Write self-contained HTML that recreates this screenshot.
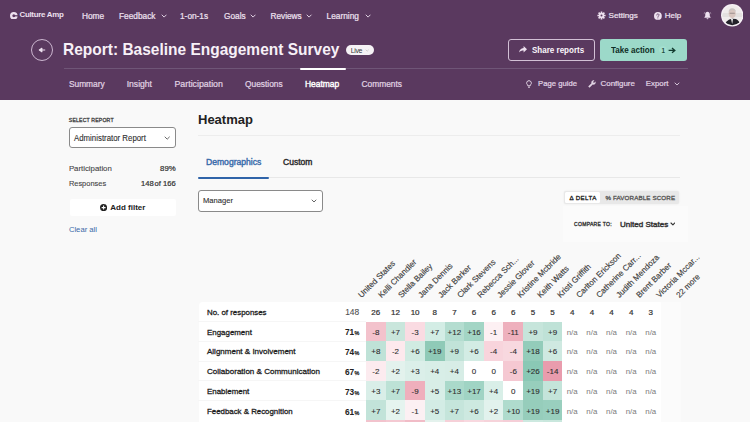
<!DOCTYPE html>
<html><head><meta charset="utf-8">
<style>
*{box-sizing:border-box;margin:0;padding:0}
html,body{width:750px;height:422px;overflow:hidden;background:#f9f9f9;font-family:"Liberation Sans", sans-serif;color:#222;position:relative}
.t{position:absolute;white-space:nowrap;line-height:1}
.r{position:absolute}
</style></head><body>
<div class="r" style="left:0.00px;top:0.00px;width:750.00px;height:100.00px;background:#5a395f"></div>
<svg class="r" style="left:10.1px;top:11.6px" width="7.6" height="7.6" viewBox="0 0 76 76"><circle cx="38" cy="38" r="26.5" fill="none" stroke="#ede0ef" stroke-width="23"/><rect x="40" y="32" width="40" height="12" fill="#5a395f"/></svg>
<div class="t" style="left:19.50px;top:11.18px;font-size:7.9px;font-weight:bold;color:#ede0ef;letter-spacing:-0.28px">Culture Amp</div>
<div class="t" style="left:82.00px;top:11.75px;font-size:8.3px;font-weight:normal;-webkit-text-stroke:0.22px #ede0ef;color:#ede0ef;">Home</div>
<div class="t" style="left:119.00px;top:11.75px;font-size:8.3px;font-weight:normal;-webkit-text-stroke:0.22px #ede0ef;color:#ede0ef;">Feedback</div>
<svg class="r" style="left:161.00px;top:13.85px" width="6.20" height="4.10"><path d="M1 1 L3.10 3.10 L5.20 1" fill="none" stroke="#ede0ef" stroke-width="0.9" stroke-linecap="round" stroke-linejoin="round"/></svg>
<div class="t" style="left:180.00px;top:11.75px;font-size:8.3px;font-weight:normal;-webkit-text-stroke:0.22px #ede0ef;color:#ede0ef;">1-on-1s</div>
<div class="t" style="left:224.00px;top:11.75px;font-size:8.3px;font-weight:normal;-webkit-text-stroke:0.22px #ede0ef;color:#ede0ef;">Goals</div>
<svg class="r" style="left:249.50px;top:13.85px" width="6.20" height="4.10"><path d="M1 1 L3.10 3.10 L5.20 1" fill="none" stroke="#ede0ef" stroke-width="0.9" stroke-linecap="round" stroke-linejoin="round"/></svg>
<div class="t" style="left:270.40px;top:11.75px;font-size:8.3px;font-weight:normal;-webkit-text-stroke:0.22px #ede0ef;color:#ede0ef;">Reviews</div>
<svg class="r" style="left:306.40px;top:13.85px" width="6.20" height="4.10"><path d="M1 1 L3.10 3.10 L5.20 1" fill="none" stroke="#ede0ef" stroke-width="0.9" stroke-linecap="round" stroke-linejoin="round"/></svg>
<div class="t" style="left:326.60px;top:11.75px;font-size:8.3px;font-weight:normal;-webkit-text-stroke:0.22px #ede0ef;color:#ede0ef;">Learning</div>
<svg class="r" style="left:364.60px;top:13.85px" width="6.20" height="4.10"><path d="M1 1 L3.10 3.10 L5.20 1" fill="none" stroke="#ede0ef" stroke-width="0.9" stroke-linecap="round" stroke-linejoin="round"/></svg>
<svg class="r" style="left:596.7px;top:11.0px" width="9" height="9" viewBox="-4.5 -4.5 9 9"><g fill="#ede0ef"><rect x="-0.85" y="-4.1" width="1.7" height="2.5" rx="0.3" transform="rotate(0)"/><rect x="-0.85" y="-4.1" width="1.7" height="2.5" rx="0.3" transform="rotate(45)"/><rect x="-0.85" y="-4.1" width="1.7" height="2.5" rx="0.3" transform="rotate(90)"/><rect x="-0.85" y="-4.1" width="1.7" height="2.5" rx="0.3" transform="rotate(135)"/><rect x="-0.85" y="-4.1" width="1.7" height="2.5" rx="0.3" transform="rotate(180)"/><rect x="-0.85" y="-4.1" width="1.7" height="2.5" rx="0.3" transform="rotate(225)"/><rect x="-0.85" y="-4.1" width="1.7" height="2.5" rx="0.3" transform="rotate(270)"/><rect x="-0.85" y="-4.1" width="1.7" height="2.5" rx="0.3" transform="rotate(315)"/><circle r="2.75"/></g><circle r="1.0" fill="#5a395f"/></svg>
<div class="t" style="left:608.60px;top:12.12px;font-size:8.1px;font-weight:normal;-webkit-text-stroke:0.22px #ede0ef;color:#ede0ef;">Settings</div>
<svg class="r" style="left:653.8px;top:11.9px" width="7.8" height="7.8" viewBox="0 0 16 16"><circle cx="8" cy="8" r="8" fill="#ede0ef"/><path d="M5.6 6.2a2.4 2.4 0 1 1 3.4 2.2c-.6.3-1 .7-1 1.4v.4" fill="none" stroke="#5a395f" stroke-width="1.6" stroke-linecap="round"/><circle cx="8" cy="12.3" r="1.0" fill="#5a395f"/></svg>
<div class="t" style="left:664.70px;top:12.20px;font-size:8.0px;font-weight:normal;-webkit-text-stroke:0.22px #ede0ef;color:#ede0ef;">Help</div>
<svg class="r" style="left:702.5px;top:10.8px" width="9" height="9" viewBox="0 0 16 16"><path fill="#ede0ef" d="M8 1.5c-2.4 0-4 1.9-4 4.3v3L2.5 11v1h11v-1L12 8.8v-3C12 3.4 10.4 1.5 8 1.5zM6.3 13a1.7 1.7 0 0 0 3.4 0z"/><path d="M1.5 4.5 L3.2 3 M14.5 4.5 L12.8 3" stroke="#ede0ef" stroke-width="1.3"/></svg>
<svg class="r" style="left:720.5px;top:4.3px" width="22.5" height="22.5" viewBox="0 0 225 225"><defs><clipPath id="av"><circle cx="112.5" cy="112.5" r="100"/></clipPath></defs><circle cx="112.5" cy="112.5" r="112" fill="#f6f0f6"/><g clip-path="url(#av)"><rect width="225" height="225" fill="#efebeb"/><rect x="0" y="90" width="225" height="40" fill="#e3e0df"/><ellipse cx="112" cy="95" rx="36" ry="46" fill="#d9c6c0"/><path d="M76 80 Q80 40 112 42 Q146 42 150 80 Q140 60 112 60 Q86 60 76 80Z" fill="#c9c4c3"/><rect x="86" y="88" width="52" height="8" fill="#8d8384"/><path d="M30 225 L55 175 Q80 150 112 148 L150 150 Q185 165 200 225Z" fill="#23222a"/><path d="M100 150 L120 150 L112 200Z" fill="#f2f2f2"/></g></svg>
<div class="r" style="left:31px;top:39px;width:22px;height:22px;border-radius:50%;border:1px solid #cbb6cf"></div>
<svg class="r" style="left:38px;top:46px" width="8" height="8" viewBox="0 0 8 8"><path d="M7.2 4 H2 M3.9 2.2 L1.3 4 L3.9 5.8 Z" fill="#ede0ef" stroke="#ede0ef" stroke-width="1.1" stroke-linejoin="round"/></svg>
<div class="t" style="left:63.40px;top:41.66px;font-size:15.7px;font-weight:bold;color:#f7f0f7;transform:scaleX(0.9876);transform-origin:left;">Report: Baseline Engagement Survey</div>
<div class="r" style="left:345.8px;top:45px;width:28.5px;height:10.3px;border-radius:5.2px;background:#f6f2f6"></div>
<div class="t" style="left:350.80px;top:47.35px;font-size:7.0px;font-weight:normal;color:#383838;letter-spacing:-0.414px;">Live</div>
<svg class="r" style="left:364.50px;top:48.70px" width="4.40" height="3.20"><path d="M1 1 L2.20 2.20 L3.40 1" fill="none" stroke="#bbb" stroke-width="0.6" stroke-linecap="round" stroke-linejoin="round"/></svg>
<div class="r" style="left:508px;top:39.3px;width:87px;height:21.4px;border:1px solid #d2c0d5;border-radius:3px"></div>
<svg class="r" style="left:518.5px;top:46px" width="8" height="7" viewBox="0 0 8 7"><path fill="#ede0ef" d="M4.6 0 L8 3.2 L4.6 6.4 V4.5 C2.6 4.5 1.2 5 0 6.6 C0.4 4 1.8 2.3 4.6 2 Z"/></svg>
<div class="t" style="left:532.00px;top:46.12px;font-size:8.8px;font-weight:bold;color:#fbf6fb;transform:scaleX(0.9122);transform-origin:left;">Share reports</div>
<div class="r" style="left:600.3px;top:39.3px;width:86.5px;height:21.4px;background:#9cd9c9;border-radius:3px"></div>
<div class="t" style="left:611.00px;top:46.12px;font-size:8.8px;font-weight:bold;color:#0f2e25;transform:scaleX(0.9149);transform-origin:left;">Take action</div>
<div class="r" style="left:659.3px;top:45.8px;width:8px;height:8px;border-radius:50%;background:radial-gradient(circle,#a9e2d3 0,#a3dfcf 60%,rgba(163,223,207,0) 100%)"></div>
<div class="t" style="left:661.40px;top:47.85px;font-size:6.3px;font-weight:bold;color:#1f4d40;">1</div>
<svg class="r" style="left:667.6px;top:46.7px" width="8" height="7" viewBox="0 0 8 7"><path d="M0.6 3.4 H6.2 M4 1.1 L6.8 3.4 L4 5.7" fill="none" stroke="#123a2e" stroke-width="1.35" stroke-linejoin="miter"/></svg>
<div class="r" style="left:64.00px;top:68.00px;width:624.00px;height:1.00px;background:#6f5577"></div>
<div class="r" style="left:300.00px;top:67.60px;width:45.50px;height:2.60px;background:#fff;border-radius:1px"></div>
<div class="t" style="left:68.90px;top:79.86px;font-size:8.4px;font-weight:normal;-webkit-text-stroke:0.22px #e0d3e3;color:#e0d3e3;">Summary</div>
<div class="t" style="left:126.70px;top:79.69px;font-size:8.6px;font-weight:normal;-webkit-text-stroke:0.22px #e0d3e3;color:#e0d3e3;">Insight</div>
<div class="t" style="left:174.50px;top:79.52px;font-size:8.8px;font-weight:normal;-webkit-text-stroke:0.22px #e0d3e3;color:#e0d3e3;">Participation</div>
<div class="t" style="left:245.00px;top:79.86px;font-size:8.4px;font-weight:normal;-webkit-text-stroke:0.22px #e0d3e3;color:#e0d3e3;">Questions</div>
<div class="t" style="left:305.20px;top:79.69px;font-size:8.6px;font-weight:normal;-webkit-text-stroke:0.4px #fff;color:#fff;transform:scaleX(0.9801);transform-origin:left;">Heatmap</div>
<div class="t" style="left:361.50px;top:79.86px;font-size:8.4px;font-weight:normal;-webkit-text-stroke:0.22px #e0d3e3;color:#e0d3e3;">Comments</div>
<svg class="r" style="left:526px;top:80px" width="6" height="9" viewBox="0 0 6 9"><path d="M3 0.7 A2.3 2.3 0 0 1 4.6 4.7 L4.2 5.8 H1.8 L1.4 4.7 A2.3 2.3 0 0 1 3 0.7 Z M2 7.2 H4" fill="none" stroke="#e0d3e3" stroke-width="1"/></svg>
<div class="t" style="left:538.10px;top:80.45px;font-size:7.7px;font-weight:normal;-webkit-text-stroke:0.22px #e0d3e3;color:#e0d3e3;">Page guide</div>
<svg class="r" style="left:588.3px;top:79.6px" width="8" height="8" viewBox="0 0 24 24"><path transform="translate(24 0) scale(-1 1)" fill="#e0d3e3" d="M22.7 19l-9.1-9.1c.9-2.3.4-5-1.5-6.9-2-2-5-2.4-7.4-1.3L9 6 6 9 1.6 4.7C.4 7.1.9 10.1 2.9 12.1c1.9 1.9 4.6 2.4 6.9 1.5l9.1 9.1c.4.4 1 .4 1.4 0l2.3-2.3c.5-.4.5-1.1.1-1.4z"/></svg>
<div class="t" style="left:600.50px;top:80.24px;font-size:7.95px;font-weight:normal;-webkit-text-stroke:0.22px #e0d3e3;color:#e0d3e3;">Configure</div>
<div class="t" style="left:645.80px;top:80.33px;font-size:7.85px;font-weight:normal;-webkit-text-stroke:0.22px #e0d3e3;color:#e0d3e3;">Export</div>
<svg class="r" style="left:674.30px;top:82.30px" width="6.00" height="4.00"><path d="M1 1 L3.00 3.00 L5.00 1" fill="none" stroke="#e0d3e3" stroke-width="0.9" stroke-linecap="round" stroke-linejoin="round"/></svg>
<div class="r" style="left:0.00px;top:100.00px;width:750.00px;height:322.00px;background:#f9f9f9"></div>
<div class="t" style="left:68.80px;top:118.38px;font-size:5.2px;font-weight:normal;-webkit-text-stroke:0.3px #444;color:#444;letter-spacing:0.145px;">SELECT REPORT</div>
<div class="r" style="left:68.8px;top:127.2px;width:106.8px;height:21.2px;border:1px solid #8a8a8a;border-radius:3px;background:#fff"></div>
<div class="t" style="left:74.20px;top:134.53px;font-size:8.2px;font-weight:normal;-webkit-text-stroke:0.1px #2e2e2e;color:#2e2e2e;transform:scaleX(0.9575);transform-origin:left;">Administrator Report</div>
<svg class="r" style="left:164.30px;top:135.50px" width="6.40" height="4.20"><path d="M1 1 L3.20 3.20 L5.40 1" fill="none" stroke="#555" stroke-width="0.9" stroke-linecap="round" stroke-linejoin="round"/></svg>
<div class="t" style="left:68.90px;top:165.27px;font-size:7.8px;font-weight:normal;-webkit-text-stroke:0.1px #444;color:#444;">Participation</div>
<div class="t" style="right:574.30px;top:165.27px;font-size:7.8px;font-weight:normal;-webkit-text-stroke:0.22px #333;color:#333;">89%</div>
<div class="t" style="left:68.90px;top:180.47px;font-size:7.45px;font-weight:normal;-webkit-text-stroke:0.1px #444;color:#444;">Responses</div>
<div class="t" style="right:574.30px;top:180.34px;font-size:7.6px;font-weight:normal;-webkit-text-stroke:0.22px #333;color:#333;">148<span style="letter-spacing:-1.2px"> </span>of 166</div>
<div class="r" style="left:70px;top:198.8px;width:105.7px;height:17.6px;background:#fff;border-radius:2px"></div>
<svg class="r" style="left:100px;top:203.8px" width="7.2" height="7.2" viewBox="0 0 8 8"><circle cx="4" cy="4" r="4" fill="#222"/><path d="M4 1.8 V6.2 M1.8 4 H6.2" stroke="#fff" stroke-width="1.2"/></svg>
<div class="t" style="left:110.30px;top:203.60px;font-size:8.0px;font-weight:bold;color:#222;">Add filter</div>
<div class="t" style="left:68.90px;top:225.69px;font-size:7.66px;font-weight:normal;color:#3a69a8;">Clear all</div>
<div class="t" style="left:198.00px;top:112.65px;font-size:13px;font-weight:bold;color:#222;">Heatmap</div>
<div class="r" style="left:198.00px;top:134.80px;width:482.00px;height:1.00px;background:#ededed"></div>
<div class="t" style="left:205.70px;top:158.26px;font-size:8.4px;font-weight:normal;-webkit-text-stroke:0.4px #3a6cab;color:#3a6cab;transform:scaleX(1.0248);transform-origin:left;">Demographics</div>
<div class="t" style="left:283.00px;top:158.26px;font-size:8.4px;font-weight:normal;-webkit-text-stroke:0.4px #2a2a2a;color:#2a2a2a;transform:scaleX(1.0159);transform-origin:left;">Custom</div>
<div class="r" style="left:198.00px;top:177.40px;width:482.00px;height:1.00px;background:#e8e8e8"></div>
<div class="r" style="left:198.00px;top:176.60px;width:71.30px;height:2.20px;background:#2f64a9;border-radius:1.1px"></div>
<div class="r" style="left:198px;top:190px;width:125.3px;height:22px;border:1px solid #8a8a8a;border-radius:3px;background:#fff"></div>
<div class="t" style="left:203.00px;top:197.20px;font-size:8.0px;font-weight:normal;-webkit-text-stroke:0.1px #2e2e2e;color:#2e2e2e;transform:scaleX(0.9501);transform-origin:left;">Manager</div>
<svg class="r" style="left:311.40px;top:198.50px" width="6.00" height="4.00"><path d="M1 1 L3.00 3.00 L5.00 1" fill="none" stroke="#555" stroke-width="0.9" stroke-linecap="round" stroke-linejoin="round"/></svg>
<div class="r" style="left:564.4px;top:190.6px;width:114.8px;height:13.6px;background:#e8e8e8;border-radius:2px;box-shadow:0 0 2px rgba(0,0,0,0.08)"></div>
<div class="r" style="left:565.40px;top:191.60px;width:34.60px;height:11.60px;background:#fff;border-radius:1.5px"></div>
<div class="t" style="left:569.40px;top:194.93px;font-size:6.2px;font-weight:normal;-webkit-text-stroke:0.3px #222;color:#222;letter-spacing:0.402px;">Δ DELTA</div>
<div class="t" style="left:605.40px;top:194.93px;font-size:6.2px;font-weight:normal;-webkit-text-stroke:0.3px #555;color:#555;letter-spacing:0.149px;">% FAVORABLE SCORE</div>
<div class="r" style="left:563.00px;top:206.00px;width:125.00px;height:36.00px;background:#fbfbfb"></div>
<div class="t" style="left:574.00px;top:221.97px;font-size:5.1px;font-weight:normal;-webkit-text-stroke:0.3px #333;color:#333;letter-spacing:0.256px;">COMPARE TO:</div>
<div class="t" style="left:619.80px;top:220.54px;font-size:7.6px;font-weight:normal;-webkit-text-stroke:0.4px #333;color:#333;transform:scaleX(1.0564);transform-origin:left;">United States</div>
<svg class="r" style="left:669.60px;top:222.05px" width="5.80" height="3.90"><path d="M1 1 L2.90 2.90 L4.80 1" fill="none" stroke="#333" stroke-width="1.1" stroke-linecap="round" stroke-linejoin="round"/></svg>
<div class="t" style="left:362.30px;top:291.92px;font-size:8.1px;color:#3d3d3d;-webkit-text-stroke:0.15px #3d3d3d;transform-origin:0 6.88px;transform:rotate(-45deg)">United States</div>
<div class="t" style="left:382.13px;top:291.92px;font-size:8.1px;color:#3d3d3d;-webkit-text-stroke:0.15px #3d3d3d;transform-origin:0 6.88px;transform:rotate(-45deg)">Kelli Chandler</div>
<div class="t" style="left:401.96px;top:291.92px;font-size:8.1px;color:#3d3d3d;-webkit-text-stroke:0.15px #3d3d3d;transform-origin:0 6.88px;transform:rotate(-45deg)">Stella Bailey</div>
<div class="t" style="left:421.79px;top:291.92px;font-size:8.1px;color:#3d3d3d;-webkit-text-stroke:0.15px #3d3d3d;transform-origin:0 6.88px;transform:rotate(-45deg)">Jana Dennis</div>
<div class="t" style="left:441.62px;top:291.92px;font-size:8.1px;color:#3d3d3d;-webkit-text-stroke:0.15px #3d3d3d;transform-origin:0 6.88px;transform:rotate(-45deg)">Jack Barker</div>
<div class="t" style="left:461.45px;top:291.92px;font-size:8.1px;color:#3d3d3d;-webkit-text-stroke:0.15px #3d3d3d;transform-origin:0 6.88px;transform:rotate(-45deg)">Clark Stevens</div>
<div class="t" style="left:481.28px;top:291.92px;font-size:8.1px;color:#3d3d3d;-webkit-text-stroke:0.15px #3d3d3d;transform-origin:0 6.88px;transform:rotate(-45deg)">Rebecca Sch...</div>
<div class="t" style="left:501.11px;top:291.92px;font-size:8.1px;color:#3d3d3d;-webkit-text-stroke:0.15px #3d3d3d;transform-origin:0 6.88px;transform:rotate(-45deg)">Jessie Glover</div>
<div class="t" style="left:520.94px;top:291.92px;font-size:8.1px;color:#3d3d3d;-webkit-text-stroke:0.15px #3d3d3d;transform-origin:0 6.88px;transform:rotate(-45deg)">Kristine Mcbride</div>
<div class="t" style="left:540.77px;top:291.92px;font-size:8.1px;color:#3d3d3d;-webkit-text-stroke:0.15px #3d3d3d;transform-origin:0 6.88px;transform:rotate(-45deg)">Keith Watts</div>
<div class="t" style="left:560.60px;top:291.92px;font-size:8.1px;color:#3d3d3d;-webkit-text-stroke:0.15px #3d3d3d;transform-origin:0 6.88px;transform:rotate(-45deg)">Kristi Griffith</div>
<div class="t" style="left:580.43px;top:291.92px;font-size:8.1px;color:#3d3d3d;-webkit-text-stroke:0.15px #3d3d3d;transform-origin:0 6.88px;transform:rotate(-45deg)">Carlton Erickson</div>
<div class="t" style="left:600.26px;top:291.92px;font-size:8.1px;color:#3d3d3d;-webkit-text-stroke:0.15px #3d3d3d;transform-origin:0 6.88px;transform:rotate(-45deg)">Catherine Carr...</div>
<div class="t" style="left:620.09px;top:291.92px;font-size:8.1px;color:#3d3d3d;-webkit-text-stroke:0.15px #3d3d3d;transform-origin:0 6.88px;transform:rotate(-45deg)">Judith Mendoza</div>
<div class="t" style="left:639.92px;top:291.92px;font-size:8.1px;color:#3d3d3d;-webkit-text-stroke:0.15px #3d3d3d;transform-origin:0 6.88px;transform:rotate(-45deg)">Brent Barber</div>
<div class="t" style="left:659.75px;top:291.92px;font-size:8.1px;color:#3d3d3d;-webkit-text-stroke:0.15px #3d3d3d;transform-origin:0 6.88px;transform:rotate(-45deg)">Victoria Mccar...</div>
<div class="t" style="left:679.58px;top:291.92px;font-size:8.1px;color:#3d3d3d;-webkit-text-stroke:0.15px #3d3d3d;transform-origin:0 6.88px;transform:rotate(-45deg)">22 more</div>
<div class="r" style="left:660.00px;top:302.00px;width:21.00px;height:120.00px;background:#fbfbfb"></div>
<div class="r" style="left:198.6px;top:302.0px;width:462.4px;height:130px;background:#fff;border-radius:4px 1px 0 0"></div>
<div class="r" style="left:198.00px;top:321.20px;width:168.00px;height:1.00px;background:#f6f6f6"></div>
<div class="r" style="left:198.00px;top:340.90px;width:168.00px;height:1.00px;background:#f6f6f6"></div>
<div class="r" style="left:198.00px;top:360.60px;width:168.00px;height:1.00px;background:#f6f6f6"></div>
<div class="r" style="left:198.00px;top:380.30px;width:168.00px;height:1.00px;background:#f6f6f6"></div>
<div class="r" style="left:198.00px;top:400.00px;width:168.00px;height:1.00px;background:#f6f6f6"></div>
<div class="t" style="left:207.10px;top:308.81px;font-size:8.1px;font-weight:normal;-webkit-text-stroke:0.3px #1e1e1e;color:#1e1e1e;transform:scaleX(0.9733);transform-origin:left;">No. of responses</div>
<div class="t" style="right:390.70px;top:308.47px;font-size:8.5px;font-weight:normal;-webkit-text-stroke:0.1px #505050;color:#505050;transform:scaleX(0.9872);transform-origin:right;">148</div>
<div class="t" style="left:207.10px;top:328.51px;font-size:8.1px;font-weight:normal;-webkit-text-stroke:0.3px #1e1e1e;color:#1e1e1e;transform:scaleX(0.9775);transform-origin:left;">Engagement</div>
<div class="t" style="right:390.70px;top:328.34px;font-size:8.3px;font-weight:bold;color:#222;">71<span style="font-size:5.4px;font-weight:normal;-webkit-text-stroke:0.25px #222;margin-left:0.3px">%</span></div>
<div class="t" style="left:207.10px;top:348.21px;font-size:8.1px;font-weight:normal;-webkit-text-stroke:0.3px #1e1e1e;color:#1e1e1e;transform:scaleX(0.9889);transform-origin:left;">Alignment &amp; Involvement</div>
<div class="t" style="right:390.70px;top:348.04px;font-size:8.3px;font-weight:bold;color:#222;">74<span style="font-size:5.4px;font-weight:normal;-webkit-text-stroke:0.25px #222;margin-left:0.3px">%</span></div>
<div class="t" style="left:207.10px;top:367.91px;font-size:8.1px;font-weight:normal;-webkit-text-stroke:0.3px #1e1e1e;color:#1e1e1e;transform:scaleX(0.9920);transform-origin:left;">Collaboration &amp; Communication</div>
<div class="t" style="right:390.70px;top:367.74px;font-size:8.3px;font-weight:bold;color:#222;">67<span style="font-size:5.4px;font-weight:normal;-webkit-text-stroke:0.25px #222;margin-left:0.3px">%</span></div>
<div class="t" style="left:207.10px;top:388.01px;font-size:8.1px;font-weight:normal;-webkit-text-stroke:0.3px #1e1e1e;color:#1e1e1e;transform:scaleX(0.9785);transform-origin:left;">Enablement</div>
<div class="t" style="right:390.70px;top:387.84px;font-size:8.3px;font-weight:bold;color:#222;">73<span style="font-size:5.4px;font-weight:normal;-webkit-text-stroke:0.25px #222;margin-left:0.3px">%</span></div>
<div class="t" style="left:207.10px;top:408.21px;font-size:8.1px;font-weight:normal;-webkit-text-stroke:0.3px #1e1e1e;color:#1e1e1e;transform:scaleX(0.9711);transform-origin:left;">Feedback &amp; Recognition</div>
<div class="t" style="right:390.70px;top:408.04px;font-size:8.3px;font-weight:bold;color:#222;">61<span style="font-size:5.4px;font-weight:normal;-webkit-text-stroke:0.25px #222;margin-left:0.3px">%</span></div>
<div class="t" style="left:345.82px;width:60px;text-align:center;top:309.10px;font-size:8.0px;font-weight:normal;-webkit-text-stroke:0.22px #333;color:#333;">26</div>
<div class="t" style="left:365.46px;width:60px;text-align:center;top:309.10px;font-size:8.0px;font-weight:normal;-webkit-text-stroke:0.22px #333;color:#333;">12</div>
<div class="t" style="left:385.10px;width:60px;text-align:center;top:309.10px;font-size:8.0px;font-weight:normal;-webkit-text-stroke:0.22px #333;color:#333;">10</div>
<div class="t" style="left:404.74px;width:60px;text-align:center;top:309.10px;font-size:8.0px;font-weight:normal;-webkit-text-stroke:0.22px #333;color:#333;">8</div>
<div class="t" style="left:424.38px;width:60px;text-align:center;top:309.10px;font-size:8.0px;font-weight:normal;-webkit-text-stroke:0.22px #333;color:#333;">7</div>
<div class="t" style="left:444.02px;width:60px;text-align:center;top:309.10px;font-size:8.0px;font-weight:normal;-webkit-text-stroke:0.22px #333;color:#333;">6</div>
<div class="t" style="left:463.66px;width:60px;text-align:center;top:309.10px;font-size:8.0px;font-weight:normal;-webkit-text-stroke:0.22px #333;color:#333;">6</div>
<div class="t" style="left:483.30px;width:60px;text-align:center;top:309.10px;font-size:8.0px;font-weight:normal;-webkit-text-stroke:0.22px #333;color:#333;">6</div>
<div class="t" style="left:502.94px;width:60px;text-align:center;top:309.10px;font-size:8.0px;font-weight:normal;-webkit-text-stroke:0.22px #333;color:#333;">5</div>
<div class="t" style="left:522.58px;width:60px;text-align:center;top:309.10px;font-size:8.0px;font-weight:normal;-webkit-text-stroke:0.22px #333;color:#333;">5</div>
<div class="t" style="left:542.22px;width:60px;text-align:center;top:309.10px;font-size:8.0px;font-weight:normal;-webkit-text-stroke:0.22px #333;color:#333;">4</div>
<div class="t" style="left:561.86px;width:60px;text-align:center;top:309.10px;font-size:8.0px;font-weight:normal;-webkit-text-stroke:0.22px #333;color:#333;">4</div>
<div class="t" style="left:581.50px;width:60px;text-align:center;top:309.10px;font-size:8.0px;font-weight:normal;-webkit-text-stroke:0.22px #333;color:#333;">4</div>
<div class="t" style="left:601.14px;width:60px;text-align:center;top:309.10px;font-size:8.0px;font-weight:normal;-webkit-text-stroke:0.22px #333;color:#333;">4</div>
<div class="t" style="left:620.78px;width:60px;text-align:center;top:309.10px;font-size:8.0px;font-weight:normal;-webkit-text-stroke:0.22px #333;color:#333;">3</div>
<div class="r" style="left:366.00px;top:322.00px;width:20.00px;height:19.00px;background:#f3c2cc"></div>
<div class="t" style="left:345.82px;width:60px;text-align:center;top:328.50px;font-size:8.0px;font-weight:normal;-webkit-text-stroke:0.1px #2e2e2e;color:#2e2e2e;">-8</div>
<div class="r" style="left:386.00px;top:322.00px;width:19.00px;height:19.00px;background:#c9e6dc"></div>
<div class="t" style="left:365.46px;width:60px;text-align:center;top:328.50px;font-size:8.0px;font-weight:normal;-webkit-text-stroke:0.1px #2e2e2e;color:#2e2e2e;">+7</div>
<div class="r" style="left:405.00px;top:322.00px;width:20.00px;height:19.00px;background:#fadbe2"></div>
<div class="t" style="left:385.10px;width:60px;text-align:center;top:328.50px;font-size:8.0px;font-weight:normal;-webkit-text-stroke:0.1px #2e2e2e;color:#2e2e2e;">-3</div>
<div class="r" style="left:425.00px;top:322.00px;width:20.00px;height:19.00px;background:#d3ede5"></div>
<div class="t" style="left:404.74px;width:60px;text-align:center;top:328.50px;font-size:8.0px;font-weight:normal;-webkit-text-stroke:0.1px #2e2e2e;color:#2e2e2e;">+7</div>
<div class="r" style="left:445.00px;top:322.00px;width:19.00px;height:19.00px;background:#b4ddd0"></div>
<div class="t" style="left:424.38px;width:60px;text-align:center;top:328.50px;font-size:8.0px;font-weight:normal;-webkit-text-stroke:0.1px #2e2e2e;color:#2e2e2e;">+12</div>
<div class="r" style="left:464.00px;top:322.00px;width:20.00px;height:19.00px;background:#a3d5c5"></div>
<div class="t" style="left:444.02px;width:60px;text-align:center;top:328.50px;font-size:8.0px;font-weight:normal;-webkit-text-stroke:0.1px #2e2e2e;color:#2e2e2e;">+16</div>
<div class="r" style="left:484.00px;top:322.00px;width:19.00px;height:19.00px;background:#fdf0f3"></div>
<div class="t" style="left:463.66px;width:60px;text-align:center;top:328.50px;font-size:8.0px;font-weight:normal;-webkit-text-stroke:0.1px #2e2e2e;color:#2e2e2e;">-1</div>
<div class="r" style="left:503.00px;top:322.00px;width:20.00px;height:19.00px;background:#eeb0bd"></div>
<div class="t" style="left:483.30px;width:60px;text-align:center;top:328.50px;font-size:8.0px;font-weight:normal;-webkit-text-stroke:0.1px #2e2e2e;color:#2e2e2e;">-11</div>
<div class="r" style="left:523.00px;top:322.00px;width:20.00px;height:19.00px;background:#c6e5db"></div>
<div class="t" style="left:502.94px;width:60px;text-align:center;top:328.50px;font-size:8.0px;font-weight:normal;-webkit-text-stroke:0.1px #2e2e2e;color:#2e2e2e;">+9</div>
<div class="r" style="left:543.00px;top:322.00px;width:19.00px;height:19.00px;background:#bfe2d7"></div>
<div class="t" style="left:522.58px;width:60px;text-align:center;top:328.50px;font-size:8.0px;font-weight:normal;-webkit-text-stroke:0.1px #2e2e2e;color:#2e2e2e;">+9</div>
<div class="t" style="left:542.22px;width:60px;text-align:center;top:328.59px;font-size:7.9px;font-weight:normal;color:#7a7a7a;">n/a</div>
<div class="t" style="left:561.86px;width:60px;text-align:center;top:328.59px;font-size:7.9px;font-weight:normal;color:#7a7a7a;">n/a</div>
<div class="t" style="left:581.50px;width:60px;text-align:center;top:328.59px;font-size:7.9px;font-weight:normal;color:#7a7a7a;">n/a</div>
<div class="t" style="left:601.14px;width:60px;text-align:center;top:328.59px;font-size:7.9px;font-weight:normal;color:#7a7a7a;">n/a</div>
<div class="t" style="left:620.78px;width:60px;text-align:center;top:328.59px;font-size:7.9px;font-weight:normal;color:#7a7a7a;">n/a</div>
<div class="r" style="left:366.00px;top:341.00px;width:20.00px;height:20.00px;background:#bfe2d7"></div>
<div class="t" style="left:345.82px;width:60px;text-align:center;top:348.20px;font-size:8.0px;font-weight:normal;-webkit-text-stroke:0.1px #2e2e2e;color:#2e2e2e;">+8</div>
<div class="r" style="left:386.00px;top:341.00px;width:19.00px;height:20.00px;background:#fde9ed"></div>
<div class="t" style="left:365.46px;width:60px;text-align:center;top:348.20px;font-size:8.0px;font-weight:normal;-webkit-text-stroke:0.1px #2e2e2e;color:#2e2e2e;">-2</div>
<div class="r" style="left:405.00px;top:341.00px;width:20.00px;height:20.00px;background:#d0ebe2"></div>
<div class="t" style="left:385.10px;width:60px;text-align:center;top:348.20px;font-size:8.0px;font-weight:normal;-webkit-text-stroke:0.1px #2e2e2e;color:#2e2e2e;">+6</div>
<div class="r" style="left:425.00px;top:341.00px;width:20.00px;height:20.00px;background:#8fcab7"></div>
<div class="t" style="left:404.74px;width:60px;text-align:center;top:348.20px;font-size:8.0px;font-weight:normal;-webkit-text-stroke:0.1px #2e2e2e;color:#2e2e2e;">+19</div>
<div class="r" style="left:445.00px;top:341.00px;width:19.00px;height:20.00px;background:#c1e3d8"></div>
<div class="t" style="left:424.38px;width:60px;text-align:center;top:348.20px;font-size:8.0px;font-weight:normal;-webkit-text-stroke:0.1px #2e2e2e;color:#2e2e2e;">+9</div>
<div class="r" style="left:464.00px;top:341.00px;width:20.00px;height:20.00px;background:#d3ece4"></div>
<div class="t" style="left:444.02px;width:60px;text-align:center;top:348.20px;font-size:8.0px;font-weight:normal;-webkit-text-stroke:0.1px #2e2e2e;color:#2e2e2e;">+6</div>
<div class="r" style="left:484.00px;top:341.00px;width:19.00px;height:20.00px;background:#f8d4dc"></div>
<div class="t" style="left:463.66px;width:60px;text-align:center;top:348.20px;font-size:8.0px;font-weight:normal;-webkit-text-stroke:0.1px #2e2e2e;color:#2e2e2e;">-4</div>
<div class="r" style="left:503.00px;top:341.00px;width:20.00px;height:20.00px;background:#f8d8df"></div>
<div class="t" style="left:483.30px;width:60px;text-align:center;top:348.20px;font-size:8.0px;font-weight:normal;-webkit-text-stroke:0.1px #2e2e2e;color:#2e2e2e;">-4</div>
<div class="r" style="left:523.00px;top:341.00px;width:20.00px;height:20.00px;background:#93ccba"></div>
<div class="t" style="left:502.94px;width:60px;text-align:center;top:348.20px;font-size:8.0px;font-weight:normal;-webkit-text-stroke:0.1px #2e2e2e;color:#2e2e2e;">+18</div>
<div class="r" style="left:543.00px;top:341.00px;width:19.00px;height:20.00px;background:#cfe9e1"></div>
<div class="t" style="left:522.58px;width:60px;text-align:center;top:348.20px;font-size:8.0px;font-weight:normal;-webkit-text-stroke:0.1px #2e2e2e;color:#2e2e2e;">+6</div>
<div class="t" style="left:542.22px;width:60px;text-align:center;top:348.29px;font-size:7.9px;font-weight:normal;color:#7a7a7a;">n/a</div>
<div class="t" style="left:561.86px;width:60px;text-align:center;top:348.29px;font-size:7.9px;font-weight:normal;color:#7a7a7a;">n/a</div>
<div class="t" style="left:581.50px;width:60px;text-align:center;top:348.29px;font-size:7.9px;font-weight:normal;color:#7a7a7a;">n/a</div>
<div class="t" style="left:601.14px;width:60px;text-align:center;top:348.29px;font-size:7.9px;font-weight:normal;color:#7a7a7a;">n/a</div>
<div class="t" style="left:620.78px;width:60px;text-align:center;top:348.29px;font-size:7.9px;font-weight:normal;color:#7a7a7a;">n/a</div>
<div class="r" style="left:366.00px;top:361.00px;width:20.00px;height:20.00px;background:#fcebef"></div>
<div class="t" style="left:345.82px;width:60px;text-align:center;top:367.90px;font-size:8.0px;font-weight:normal;-webkit-text-stroke:0.1px #2e2e2e;color:#2e2e2e;">-2</div>
<div class="r" style="left:386.00px;top:361.00px;width:19.00px;height:20.00px;background:#e3f2ed"></div>
<div class="t" style="left:365.46px;width:60px;text-align:center;top:367.90px;font-size:8.0px;font-weight:normal;-webkit-text-stroke:0.1px #2e2e2e;color:#2e2e2e;">+2</div>
<div class="r" style="left:405.00px;top:361.00px;width:20.00px;height:20.00px;background:#dbefe9"></div>
<div class="t" style="left:385.10px;width:60px;text-align:center;top:367.90px;font-size:8.0px;font-weight:normal;-webkit-text-stroke:0.1px #2e2e2e;color:#2e2e2e;">+3</div>
<div class="r" style="left:425.00px;top:361.00px;width:20.00px;height:20.00px;background:#d8eee7"></div>
<div class="t" style="left:404.74px;width:60px;text-align:center;top:367.90px;font-size:8.0px;font-weight:normal;-webkit-text-stroke:0.1px #2e2e2e;color:#2e2e2e;">+4</div>
<div class="r" style="left:445.00px;top:361.00px;width:19.00px;height:20.00px;background:#d7ede6"></div>
<div class="t" style="left:424.38px;width:60px;text-align:center;top:367.90px;font-size:8.0px;font-weight:normal;-webkit-text-stroke:0.1px #2e2e2e;color:#2e2e2e;">+4</div>
<div class="r" style="left:464.00px;top:361.00px;width:20.00px;height:20.00px;background:#ffffff"></div>
<div class="t" style="left:444.02px;width:60px;text-align:center;top:367.90px;font-size:8.0px;font-weight:normal;-webkit-text-stroke:0.1px #2e2e2e;color:#2e2e2e;">0</div>
<div class="r" style="left:484.00px;top:361.00px;width:19.00px;height:20.00px;background:#ffffff"></div>
<div class="t" style="left:463.66px;width:60px;text-align:center;top:367.90px;font-size:8.0px;font-weight:normal;-webkit-text-stroke:0.1px #2e2e2e;color:#2e2e2e;">0</div>
<div class="r" style="left:503.00px;top:361.00px;width:20.00px;height:20.00px;background:#f5c8d2"></div>
<div class="t" style="left:483.30px;width:60px;text-align:center;top:367.90px;font-size:8.0px;font-weight:normal;-webkit-text-stroke:0.1px #2e2e2e;color:#2e2e2e;">-6</div>
<div class="r" style="left:523.00px;top:361.00px;width:20.00px;height:20.00px;background:#8ac8b5"></div>
<div class="t" style="left:502.94px;width:60px;text-align:center;top:367.90px;font-size:8.0px;font-weight:normal;-webkit-text-stroke:0.1px #2e2e2e;color:#2e2e2e;">+26</div>
<div class="r" style="left:543.00px;top:361.00px;width:19.00px;height:20.00px;background:#e99cad"></div>
<div class="t" style="left:522.58px;width:60px;text-align:center;top:367.90px;font-size:8.0px;font-weight:normal;-webkit-text-stroke:0.1px #2e2e2e;color:#2e2e2e;">-14</div>
<div class="t" style="left:542.22px;width:60px;text-align:center;top:367.99px;font-size:7.9px;font-weight:normal;color:#7a7a7a;">n/a</div>
<div class="t" style="left:561.86px;width:60px;text-align:center;top:367.99px;font-size:7.9px;font-weight:normal;color:#7a7a7a;">n/a</div>
<div class="t" style="left:581.50px;width:60px;text-align:center;top:367.99px;font-size:7.9px;font-weight:normal;color:#7a7a7a;">n/a</div>
<div class="t" style="left:601.14px;width:60px;text-align:center;top:367.99px;font-size:7.9px;font-weight:normal;color:#7a7a7a;">n/a</div>
<div class="t" style="left:620.78px;width:60px;text-align:center;top:367.99px;font-size:7.9px;font-weight:normal;color:#7a7a7a;">n/a</div>
<div class="r" style="left:366.00px;top:381.00px;width:20.00px;height:19.00px;background:#d9eee8"></div>
<div class="t" style="left:345.82px;width:60px;text-align:center;top:388.00px;font-size:8.0px;font-weight:normal;-webkit-text-stroke:0.1px #2e2e2e;color:#2e2e2e;">+3</div>
<div class="r" style="left:386.00px;top:381.00px;width:19.00px;height:19.00px;background:#bde2d6"></div>
<div class="t" style="left:365.46px;width:60px;text-align:center;top:388.00px;font-size:8.0px;font-weight:normal;-webkit-text-stroke:0.1px #2e2e2e;color:#2e2e2e;">+7</div>
<div class="r" style="left:405.00px;top:381.00px;width:20.00px;height:19.00px;background:#efafbc"></div>
<div class="t" style="left:385.10px;width:60px;text-align:center;top:388.00px;font-size:8.0px;font-weight:normal;-webkit-text-stroke:0.1px #2e2e2e;color:#2e2e2e;">-9</div>
<div class="r" style="left:425.00px;top:381.00px;width:20.00px;height:19.00px;background:#d8eee7"></div>
<div class="t" style="left:404.74px;width:60px;text-align:center;top:388.00px;font-size:8.0px;font-weight:normal;-webkit-text-stroke:0.1px #2e2e2e;color:#2e2e2e;">+5</div>
<div class="r" style="left:445.00px;top:381.00px;width:19.00px;height:19.00px;background:#aad9ca"></div>
<div class="t" style="left:424.38px;width:60px;text-align:center;top:388.00px;font-size:8.0px;font-weight:normal;-webkit-text-stroke:0.1px #2e2e2e;color:#2e2e2e;">+13</div>
<div class="r" style="left:464.00px;top:381.00px;width:20.00px;height:19.00px;background:#a0d4c4"></div>
<div class="t" style="left:444.02px;width:60px;text-align:center;top:388.00px;font-size:8.0px;font-weight:normal;-webkit-text-stroke:0.1px #2e2e2e;color:#2e2e2e;">+17</div>
<div class="r" style="left:484.00px;top:381.00px;width:19.00px;height:19.00px;background:#d9efe8"></div>
<div class="t" style="left:463.66px;width:60px;text-align:center;top:388.00px;font-size:8.0px;font-weight:normal;-webkit-text-stroke:0.1px #2e2e2e;color:#2e2e2e;">+4</div>
<div class="r" style="left:503.00px;top:381.00px;width:20.00px;height:19.00px;background:#ffffff"></div>
<div class="t" style="left:483.30px;width:60px;text-align:center;top:388.00px;font-size:8.0px;font-weight:normal;-webkit-text-stroke:0.1px #2e2e2e;color:#2e2e2e;">0</div>
<div class="r" style="left:523.00px;top:381.00px;width:20.00px;height:19.00px;background:#97cebc"></div>
<div class="t" style="left:502.94px;width:60px;text-align:center;top:388.00px;font-size:8.0px;font-weight:normal;-webkit-text-stroke:0.1px #2e2e2e;color:#2e2e2e;">+19</div>
<div class="r" style="left:543.00px;top:381.00px;width:19.00px;height:19.00px;background:#c4e4da"></div>
<div class="t" style="left:522.58px;width:60px;text-align:center;top:388.00px;font-size:8.0px;font-weight:normal;-webkit-text-stroke:0.1px #2e2e2e;color:#2e2e2e;">+7</div>
<div class="t" style="left:542.22px;width:60px;text-align:center;top:388.09px;font-size:7.9px;font-weight:normal;color:#7a7a7a;">n/a</div>
<div class="t" style="left:561.86px;width:60px;text-align:center;top:388.09px;font-size:7.9px;font-weight:normal;color:#7a7a7a;">n/a</div>
<div class="t" style="left:581.50px;width:60px;text-align:center;top:388.09px;font-size:7.9px;font-weight:normal;color:#7a7a7a;">n/a</div>
<div class="t" style="left:601.14px;width:60px;text-align:center;top:388.09px;font-size:7.9px;font-weight:normal;color:#7a7a7a;">n/a</div>
<div class="t" style="left:620.78px;width:60px;text-align:center;top:388.09px;font-size:7.9px;font-weight:normal;color:#7a7a7a;">n/a</div>
<div class="r" style="left:366.00px;top:400.00px;width:20.00px;height:20.00px;background:#c2e3d9"></div>
<div class="t" style="left:345.82px;width:60px;text-align:center;top:408.20px;font-size:8.0px;font-weight:normal;-webkit-text-stroke:0.1px #2e2e2e;color:#2e2e2e;">+7</div>
<div class="r" style="left:386.00px;top:400.00px;width:19.00px;height:20.00px;background:#e5f4ef"></div>
<div class="t" style="left:365.46px;width:60px;text-align:center;top:408.20px;font-size:8.0px;font-weight:normal;-webkit-text-stroke:0.1px #2e2e2e;color:#2e2e2e;">+2</div>
<div class="r" style="left:405.00px;top:400.00px;width:20.00px;height:20.00px;background:#fcf0f3"></div>
<div class="t" style="left:385.10px;width:60px;text-align:center;top:408.20px;font-size:8.0px;font-weight:normal;-webkit-text-stroke:0.1px #2e2e2e;color:#2e2e2e;">-1</div>
<div class="r" style="left:425.00px;top:400.00px;width:20.00px;height:20.00px;background:#d3ece5"></div>
<div class="t" style="left:404.74px;width:60px;text-align:center;top:408.20px;font-size:8.0px;font-weight:normal;-webkit-text-stroke:0.1px #2e2e2e;color:#2e2e2e;">+5</div>
<div class="r" style="left:445.00px;top:400.00px;width:19.00px;height:20.00px;background:#c5e5db"></div>
<div class="t" style="left:424.38px;width:60px;text-align:center;top:408.20px;font-size:8.0px;font-weight:normal;-webkit-text-stroke:0.1px #2e2e2e;color:#2e2e2e;">+7</div>
<div class="r" style="left:464.00px;top:400.00px;width:20.00px;height:20.00px;background:#cde9e0"></div>
<div class="t" style="left:444.02px;width:60px;text-align:center;top:408.20px;font-size:8.0px;font-weight:normal;-webkit-text-stroke:0.1px #2e2e2e;color:#2e2e2e;">+6</div>
<div class="r" style="left:484.00px;top:400.00px;width:19.00px;height:20.00px;background:#e2f2ed"></div>
<div class="t" style="left:463.66px;width:60px;text-align:center;top:408.20px;font-size:8.0px;font-weight:normal;-webkit-text-stroke:0.1px #2e2e2e;color:#2e2e2e;">+2</div>
<div class="r" style="left:503.00px;top:400.00px;width:20.00px;height:20.00px;background:#afdbcd"></div>
<div class="t" style="left:483.30px;width:60px;text-align:center;top:408.20px;font-size:8.0px;font-weight:normal;-webkit-text-stroke:0.1px #2e2e2e;color:#2e2e2e;">+10</div>
<div class="r" style="left:523.00px;top:400.00px;width:20.00px;height:20.00px;background:#96cdbb"></div>
<div class="t" style="left:502.94px;width:60px;text-align:center;top:408.20px;font-size:8.0px;font-weight:normal;-webkit-text-stroke:0.1px #2e2e2e;color:#2e2e2e;">+19</div>
<div class="r" style="left:543.00px;top:400.00px;width:19.00px;height:20.00px;background:#99cfbe"></div>
<div class="t" style="left:522.58px;width:60px;text-align:center;top:408.20px;font-size:8.0px;font-weight:normal;-webkit-text-stroke:0.1px #2e2e2e;color:#2e2e2e;">+19</div>
<div class="t" style="left:542.22px;width:60px;text-align:center;top:408.29px;font-size:7.9px;font-weight:normal;color:#7a7a7a;">n/a</div>
<div class="t" style="left:561.86px;width:60px;text-align:center;top:408.29px;font-size:7.9px;font-weight:normal;color:#7a7a7a;">n/a</div>
<div class="t" style="left:581.50px;width:60px;text-align:center;top:408.29px;font-size:7.9px;font-weight:normal;color:#7a7a7a;">n/a</div>
<div class="t" style="left:601.14px;width:60px;text-align:center;top:408.29px;font-size:7.9px;font-weight:normal;color:#7a7a7a;">n/a</div>
<div class="t" style="left:620.78px;width:60px;text-align:center;top:408.29px;font-size:7.9px;font-weight:normal;color:#7a7a7a;">n/a</div>
<div class="r" style="left:366.00px;top:420.00px;width:20.00px;height:2.00px;background:#f2c3cd"></div>
<div class="r" style="left:386.00px;top:420.00px;width:19.00px;height:2.00px;background:#f4c9d2"></div>
<div class="r" style="left:405.00px;top:420.00px;width:20.00px;height:2.00px;background:#f1bcc7"></div>
<div class="r" style="left:425.00px;top:420.00px;width:20.00px;height:2.00px;background:#e4f2ed"></div>
<div class="r" style="left:445.00px;top:420.00px;width:19.00px;height:2.00px;background:#f6d0d8"></div>
<div class="r" style="left:464.00px;top:420.00px;width:20.00px;height:2.00px;background:#f8d8df"></div>
<div class="r" style="left:484.00px;top:420.00px;width:19.00px;height:2.00px;background:#f6d3da"></div>
<div class="r" style="left:503.00px;top:420.00px;width:20.00px;height:2.00px;background:#f5ced7"></div>
<div class="r" style="left:523.00px;top:420.00px;width:20.00px;height:2.00px;background:#cde9e0"></div>
<div class="r" style="left:543.00px;top:420.00px;width:19.00px;height:2.00px;background:#c9e7dd"></div>
</body></html>
